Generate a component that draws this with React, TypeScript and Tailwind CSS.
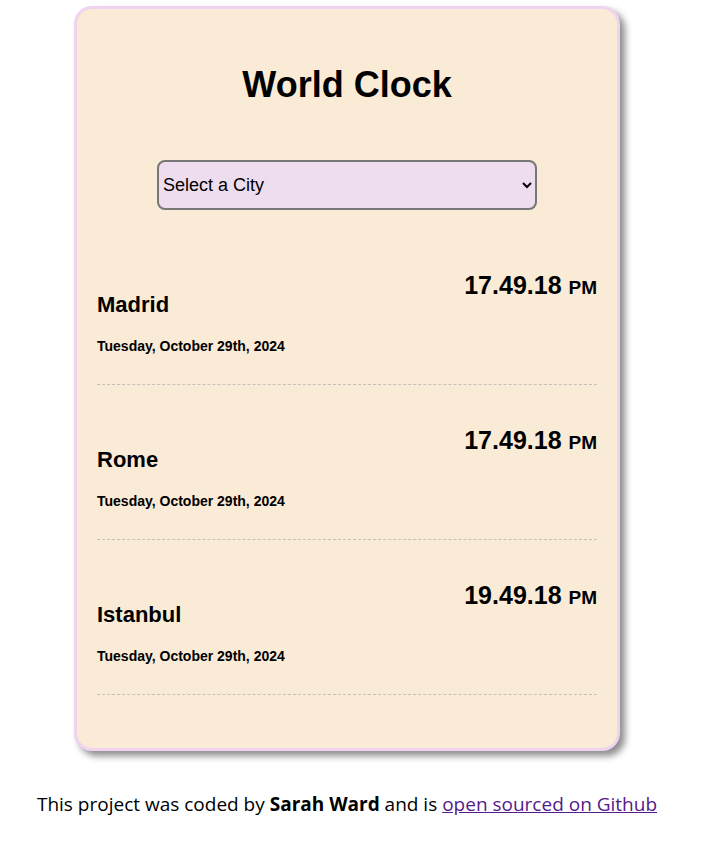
const cities = [
  { name: "Madrid", time: "17.49.18", date: "Tuesday, October 29th, 2024" },
  { name: "Rome", time: "17.49.18", date: "Tuesday, October 29th, 2024" },
  { name: "Istanbul", time: "19.49.18", date: "Tuesday, October 29th, 2024" },
];

const CityRow = ({ name, time, date }: { name: string; time: string; date: string }) => (
  <div className="flex justify-between items-start pb-[30px] border-b border-dashed border-[#c8c0b8] mt-[40px] first:mt-0">
    <div>
      <h2 className="text-[22px] leading-[28px] font-bold mt-[21px]">{name}</h2>
      <div className="text-[14px] leading-[16px] font-bold mt-[19px]">{date}</div>
    </div>
    <div className="text-[25px] leading-[30px] font-bold">
      {time} <small className="text-[19px]">PM</small>
    </div>
  </div>
);

export default function App() {
  return (
    <div className="w-[694px] pt-[6px] pb-10 text-black" style={{ fontFamily: "'Liberation Sans', Arial, sans-serif" }}>
      <div className="w-[546px] mx-auto bg-[#faebd7] border-[3px] border-[#efd3ef] rounded-[18px] shadow-[5px_5px_7px_rgba(0,0,0,0.45)] pt-[53px] pb-[53px] px-[20px]">
        <h1 className="text-[36px] leading-[46px] font-bold text-center">World Clock</h1>
        <div className="flex justify-center mt-[52px]">
          <select className="w-[380px] h-[50px] bg-[#eedcef] border-2 border-[#777] rounded-[8px] text-[18px] px-0 text-black">
            <option>Select a City</option>
          </select>
        </div>
        <div className="mt-[60px]">
          {cities.map((c) => (
            <CityRow key={c.name} {...c} />
          ))}
        </div>
      </div>
      <p className="text-center text-[19px] mt-[40px] leading-[26px]" style={{ fontFamily: "'Open Sans', sans-serif" }}>
        This project was coded by <strong>Sarah Ward</strong> and is{" "}
        <a href="#" className="underline text-[#551a8b]">open sourced on Github</a>
      </p>
    </div>
  );
}
